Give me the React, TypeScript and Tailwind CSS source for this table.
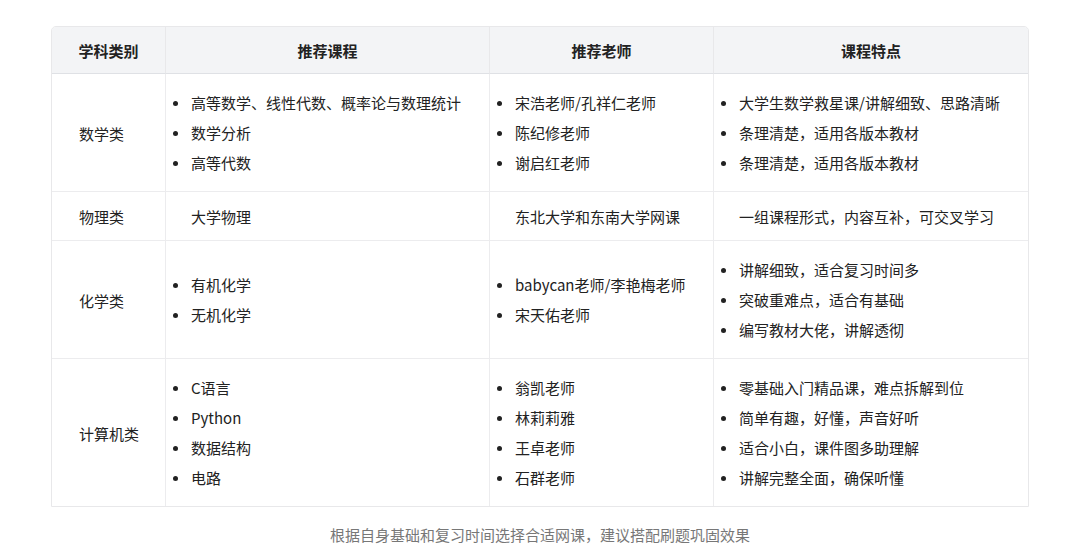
const font = { fontFamily: '"Noto Sans CJK SC", "Noto Sans", sans-serif' };

type Cell = string | string[];

interface Row {
  subject: string;
  courses: Cell;
  teachers: Cell;
  features: Cell;
}

const rows: Row[] = [
  {
    subject: '数学类',
    courses: ['高等数学、线性代数、概率论与数理统计', '数学分析', '高等代数'],
    teachers: ['宋浩老师/孔祥仁老师', '陈纪修老师', '谢启红老师'],
    features: ['大学生数学救星课/讲解细致、思路清晰', '条理清楚，适用各版本教材', '条理清楚，适用各版本教材'],
  },
  {
    subject: '物理类',
    courses: '大学物理',
    teachers: '东北大学和东南大学网课',
    features: '一组课程形式，内容互补，可交叉学习',
  },
  {
    subject: '化学类',
    courses: ['有机化学', '无机化学'],
    teachers: ['babycan老师/李艳梅老师', '宋天佑老师'],
    features: ['讲解细致，适合复习时间多', '突破重难点，适合有基础', '编写教材大佬，讲解透彻'],
  },
  {
    subject: '计算机类',
    courses: ['C语言', 'Python', '数据结构', '电路'],
    teachers: ['翁凯老师', '林莉莉雅', '王卓老师', '石群老师'],
    features: ['零基础入门精品课，难点拆解到位', '简单有趣，好懂，声音好听', '适合小白，课件图多助理解', '讲解完整全面，确保听懂'],
  },
];

function CellContent({ value }: { value: Cell }) {
  if (typeof value === 'string') {
    return <div className="pl-[25px]">{value}</div>;
  }
  return (
    <ul>
      {value.map((item, i) => (
        <li key={i} className="flex items-center pl-[7px] leading-[30px]">
          <span className="w-[5px] h-[5px] rounded-full bg-[#222] mr-[13px] shrink-0" />
          <span>{item}</span>
        </li>
      ))}
    </ul>
  );
}

export default function App() {
  return (
    <div className="w-[1080px] h-[554px] bg-white text-[15px] text-[#222]" style={font}>
      <div className="pt-[26px] px-[51px]">
        <table className="w-full leading-[21px] border-separate border-spacing-0 border border-[#e8e8ea] rounded-t-[5px] overflow-hidden table-fixed">
          <colgroup>
            <col className="w-[113px]" />
            <col className="w-[324px]" />
            <col className="w-[224px]" />
            <col />
          </colgroup>
          <thead>
            <tr className="bg-[#f3f4f6]">
              {['学科类别', '推荐课程', '推荐老师', '课程特点'].map((h, i) => (
                <th
                  key={h}
                  className={`h-[47px] font-bold text-center border-b border-[#dfe1e5] ${i > 0 ? 'border-l border-l-[#e8e8ea]' : ''}`}
                >
                  {h}
                </th>
              ))}
            </tr>
          </thead>
          <tbody>
            {rows.map((r, idx) => (
              <tr key={r.subject}>
                <td className={`pl-[27px] pt-[14px] pb-[13px] align-middle ${idx > 0 ? 'border-t border-[#ececee]' : ''}`}>
                  {r.subject}
                </td>
                {[r.courses, r.teachers, r.features].map((c, j) => (
                  <td
                    key={j}
                    className={`pt-[14px] pb-[13px] align-middle border-l border-[#ececee] ${idx > 0 ? 'border-t' : ''}`}
                  >
                    <CellContent value={c} />
                  </td>
                ))}
              </tr>
            ))}
          </tbody>
        </table>
        <p className="mt-[17px] text-center text-[#777] leading-[22px]">
          根据自身基础和复习时间选择合适网课，建议搭配刷题巩固效果
        </p>
      </div>
    </div>
  );
}
